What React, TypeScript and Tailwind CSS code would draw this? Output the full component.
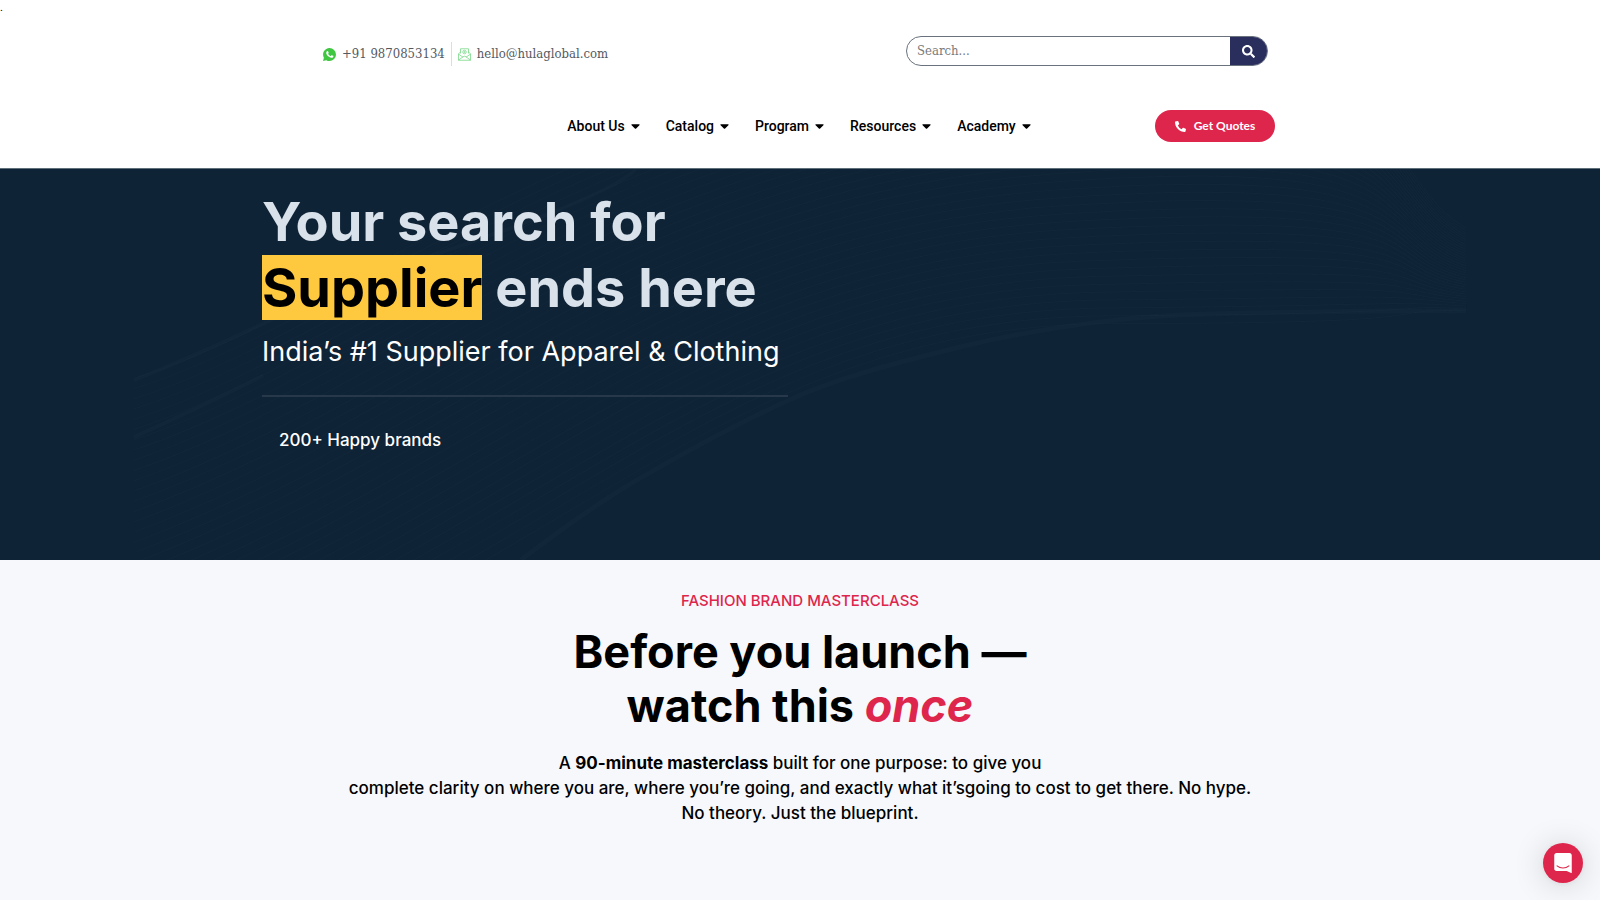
import { FaCaretDown, FaPhoneAlt, FaSearch } from "react-icons/fa";

const navItems = ["About Us", "Catalog", "Program", "Resources", "Academy"];

function MailIcon() {
	return (
		<svg viewBox="0 0 26 26" className="size-[13px] shrink-0" fill="none" stroke="#7bd88a" strokeWidth="1.6">
			<path d="M5 11V1.500h16V11" />
			<path d="M5 8 1 11.500v13h24v-13L21 8" />
			<path d="m1 12 9 6.500M25 12l-9 6.500M1 24.500l9-7q3-2 6 0l9 7" />
			<circle cx="13" cy="8" r="3.500" />
			<circle cx="13" cy="8" r="1" />
		</svg>
	);
}

function WhatsappIcon() {
	return (
		<svg viewBox="0 0 24 24" className="size-[13px] shrink-0">
			<path
				fill="#3fc742"
				d="M12 0a12 12 0 0 1 0 24c-2.200 0-4.200-.6-6-1.600L0 24l1.700-6A12 12 0 0 1 12 0Z"
			/>
			<path
				fill="#fff"
				d="M8.500 5.700c.5 0 .8.1 1 .6l1 2.400c.1.4 0 .7-.9 1.800-.2.300-.2.500 0 .8 1 1.700 2.300 2.800 4.200 3.600.3.100.5.100.7-.1l1.100-1.400c.3-.3.5-.3.800-.2l2.400 1.200c.6.300.5 1.700-.1 2.500-.8 1-2.300 1.400-3.700 1.100-3.500-.8-6.200-2.900-8.200-6C5.400 9.800 6 7.200 7.300 6c.3-.3.700-.3 1.200-.3Z"
			/>
		</svg>
	);
}

function Header() {
	return (
		<header className="border-b border-[#5f6f7a] bg-white">
			<div className="mx-auto w-full max-w-[1076px] pt-9 pb-[26px]">
				{/* Contact and search */}
				<div className="flex items-start justify-between pr-[70px] pl-[61px]">
					<div className="mt-[6px] flex h-6 items-center font-['DejaVu_Serif_Condensed','DejaVu_Serif',serif] text-[13px] text-[#54595f]">
						<a href="tel:+919870853134" className="flex items-center gap-[6px] pr-[6px]">
							<WhatsappIcon />
							+91 9870853134
						</a>
						<a
							href="mailto:hello@hulaglobal.com"
							className="flex h-6 items-center gap-[6px] border-l border-[#dddddd] pl-[6px]"
						>
							<MailIcon />
							hello@hulaglobal.com
						</a>
					</div>
					<form
						role="search"
						className="flex h-[30px] w-[362px] overflow-hidden rounded-full border border-[#69727d]"
					>
						<input
							type="search"
							aria-label="Search"
							placeholder="Search..."
							className="min-w-0 grow px-[10px] font-['DejaVu_Serif_Condensed','DejaVu_Serif',serif] text-[13px] outline-none placeholder:text-[#7a7a7a]"
						/>
						<button
							type="button"
							aria-label="Submit search"
							className="flex w-[37px] shrink-0 items-center justify-center bg-[#2a2e5c] text-white"
						>
							<FaSearch className="size-[13px]" />
						</button>
					</form>
				</div>

				{/* Main menu */}
				<div className="mt-11 grid grid-cols-[1fr_auto_1fr] items-center pr-[63px]">
					<nav className="col-start-2 ml-[61px] flex gap-[26px]">
						{navItems.map((item) => (
							<a
								key={item}
								href="#"
								className="flex items-center gap-[6px] font-[Roboto,sans-serif] text-sm font-medium text-black"
							>
								{item}
								<FaCaretDown className="h-[14px] w-[9px]" />
							</a>
						))}
					</nav>
					<a
						href="#"
						className="col-start-3 flex h-8 w-[120px] items-center justify-center gap-2 justify-self-end rounded-full bg-[#de264c] font-[Lato,sans-serif] text-xs font-bold text-white"
					>
						<FaPhoneAlt className="size-[11px]" />
						Get Quotes
					</a>
				</div>
			</div>
		</header>
	);
}

function HeroWaves() {
	const lines = Array.from({ length: 36 }, (_, i) => i / 35);
	return (
		<svg
			viewBox="0 0 1332 392"
			preserveAspectRatio="none"
			className="absolute inset-y-0 left-1/2 h-full w-5/6 -translate-x-1/2"
			fill="none"
			stroke="#2b4156"
		>
			{lines.map((t) => (
				<path
					key={t}
					strokeOpacity="0.12"
					d={`M0 ${210 + t * 360}C${200 + t * 260} ${150 + t * 230} ${420 + t * 190} ${-60 + t * 215} ${850 + t * 130} ${-120 + t * 275}S1230 ${t * 140} 1332 ${60 + t * 82}`}
				/>
			))}
			<path
				strokeWidth="5"
				strokeOpacity="0.1"
				d="M387 392C425 363 462 336 503 312S602 256 654 232S768 193 824 179S926 158 976 152S1080 145 1130 144S1270 142 1332 142"
			/>
			<path strokeWidth="4" strokeOpacity="0.1" d="M0 212Q70 184 136 152T341 72T502 0M0 269Q64 240 130 207" />
		</svg>
	);
}

function Hero() {
	return (
		<section className="relative bg-[#0f2336]">
			<HeroWaves />
			<div className="relative mx-auto w-full max-w-[1076px] pt-5 pb-[108px]">
				<h1 className="font-[Inter,sans-serif] text-[54px] leading-[66px] font-bold text-[#d9e1ea]">
					Your search for
					<br />
					<span className="bg-[#ffc93f] text-black">Supplier</span> ends here
				</h1>
				<p className="mt-[11px] font-[Inter,sans-serif] text-[27px] leading-10 text-white">
					India’s #1 Supplier for Apparel &amp; Clothing
				</p>
				<div className="mt-[23px] w-[526px] border-t-2 border-[#263849]" />
				<p className="mt-[31px] pl-[17px] font-[Inter,sans-serif] text-[17px] leading-6 font-medium text-white">
					200+ Happy brands
				</p>
			</div>
		</section>
	);
}

function Masterclass() {
	return (
		<section className="grow bg-[#f7f8fc] px-4 pt-[29px] pb-16 text-center font-[Inter,sans-serif] text-black">
			<p className="text-[15px] leading-6 font-medium text-[#de264c]">FASHION BRAND MASTERCLASS</p>
			<h2 className="mt-3 text-[45px] leading-[54px] font-bold">
				Before you launch —
				<br />
				watch this <em className="text-[#de264c]">once</em>
			</h2>
			<p className="mt-[18px] text-[17px] leading-[25px] font-medium">
				A <strong className="font-bold">90-minute masterclass</strong> built for one purpose: to give you
				<br />
				complete clarity on where you are, where you’re going, and exactly what it’sgoing to cost to get there. No hype.
				<br />
				No theory. Just the blueprint.
			</p>
		</section>
	);
}

function ChatButton() {
	return (
		<button
			type="button"
			aria-label="Open chat"
			className="fixed right-[17px] bottom-[17px] flex size-10 items-center justify-center rounded-full bg-[#de264c] shadow-[0_1px_6px_rgba(0,0,0,0.06),0_2px_32px_rgba(0,0,0,0.16)]"
		>
			<svg viewBox="0 0 28 32" className="h-5 w-[18px]">
				<path
					fill="#fff"
					d="M28 32s-4.714-1.855-8.527-3.340H3.437C1.540 28.660 0 27.026 0 25.013V3.644C0 1.633 1.540 0 3.437 0h21.125c1.898 0 3.437 1.632 3.437 3.645v18.404H28V32z"
				/>
				<path
					fill="none"
					stroke="#de264c"
					strokeWidth="1.800"
					strokeLinecap="round"
					d="M4.500 20.500c5.500 4.600 13.500 4.600 19 0"
				/>
			</svg>
		</button>
	);
}

export default function App() {
	return (
		<div className="relative flex min-h-screen flex-col">
			<span className="absolute top-0 left-0 font-[Roboto,sans-serif] text-[11px] leading-4 text-black">.</span>
			<Header />
			<Hero />
			<Masterclass />
			<ChatButton />
		</div>
	);
}
